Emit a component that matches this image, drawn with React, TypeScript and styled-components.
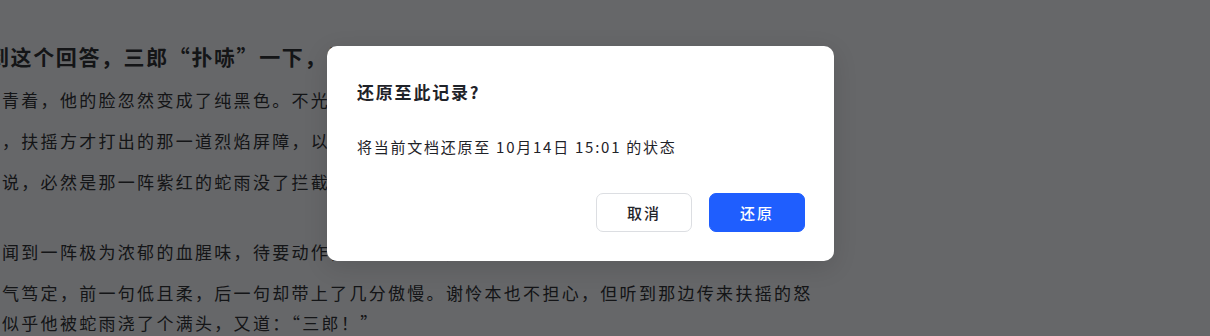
import * as React from 'react';
import styled, { createGlobalStyle } from 'styled-components';

const GlobalStyle = createGlobalStyle`
  html, body {
    margin: 0;
    padding: 0;
    background: #ffffff;
  }
  body {
    font-family: "Noto Sans CJK SC", "Noto Sans", "Liberation Sans", sans-serif;
  }
`;

const lines = [
  '青着，他的脸忽然变成了纯黑色。不光如此，连带着那一片地方都暗了下去，仿佛被罩住了。',
  '，扶摇方才打出的那一道烈焰屏障，以及那些被烧得焦黑的蛇雨残骸，全都被吞了进去。',
  '说，必然是那一阵紫红的蛇雨没了拦截，直直地浇在了他的身上，这才说不出话来。',
];

const Event = () => (
  <>
    <GlobalStyle />
    <Page>
      <Article>
        <Lead>到这个回答，三郎“扑哧”一下，笑出了声，道：“哥哥说得是。”谢怜也笑了，</Lead>
        {lines.map(line => <Line key={line}>{line}</Line>)}
        <Blank />
        <Line>闻到一阵极为浓郁的血腥味，待要动作，却听三郎在身边道：“别动。”</Line>
        <Wrapped>
          <span>气笃定，前一句低且柔，后一句却带上了几分傲慢。谢怜本也不担心，但听到那边传来扶摇的怒</span>
          <span>似乎他被蛇雨浇了个满头，又道：“三郎！”</span>
        </Wrapped>
      </Article>

      <Mask>
        <Dialog role="dialog" aria-modal="true">
          <Title>还原至此记录?</Title>
          <Body>将当前文档还原至 10月14日 15:01 的状态</Body>
          <Footer>
            <Button>取消</Button>
            <Button primary>还原</Button>
          </Footer>
        </Dialog>
      </Mask>
    </Page>
  </>
);

// STYLE
const Page = styled.div`
  position: relative;
  width: 1210px;
  height: 336px;
  overflow: hidden;
  background: #ffffff;
`;

const Article = styled.div`
  width: 832px;
  overflow: hidden;
  padding-top: 43px;
  color: #333333;
`;

const Lead = styled.p`
  margin: 0 0 19px;
  font-size: 21px;
  line-height: 26px;
  font-weight: 700;
  letter-spacing: 1.6px;
  white-space: nowrap;
  text-indent: -12px;
`;

const Line = styled.p`
  margin: 0 0 17px;
  padding-left: 2px;
  font-size: 17px;
  line-height: 24px;
  letter-spacing: 2.3px;
  white-space: nowrap;
`;

const Blank = styled.div`
  height: 29px;
`;

const Wrapped = styled(Line)`
  display: flex;
  flex-direction: column;
  gap: 6px;
`;

const Mask = styled.div`
  position: absolute;
  inset: 0;
  background: rgba(0, 2, 5, 0.6);
`;

const Dialog = styled.div`
  position: absolute;
  left: 327px;
  top: 46px;
  width: 507px;
  box-sizing: border-box;
  padding: 32px 29px 29px 30px;
  background: #ffffff;
  border-radius: 10px;
  box-shadow: 0 6px 24px rgba(0, 0, 0, 0.12);
  display: flex;
  flex-direction: column;
`;

const Title = styled.div`
  font-size: 17px;
  line-height: 28px;
  font-weight: 700;
  letter-spacing: 1.8px;
  color: #1f2329;
`;

const Body = styled.div`
  margin-top: 30px;
  font-size: 15px;
  line-height: 22px;
  letter-spacing: 1.75px;
  color: #1f2329;
`;

const Footer = styled.div`
  display: flex;
  justify-content: flex-end;
  gap: 17px;
  margin-top: 35px;
`;

const Button = styled.button<{ primary?: boolean }>`
  width: 96px;
  height: 39px;
  border-radius: 7px;
  font-family: inherit;
  font-size: 15px;
  font-weight: 500;
  letter-spacing: 2px;
  cursor: pointer;
  border: 1px solid ${props => (props.primary ? '#1f5efe' : '#dcdee2')};
  background: ${props => (props.primary ? '#1f5efe' : '#ffffff')};
  color: ${props => (props.primary ? '#ffffff' : '#1f2329')};
`;

export default Event;
